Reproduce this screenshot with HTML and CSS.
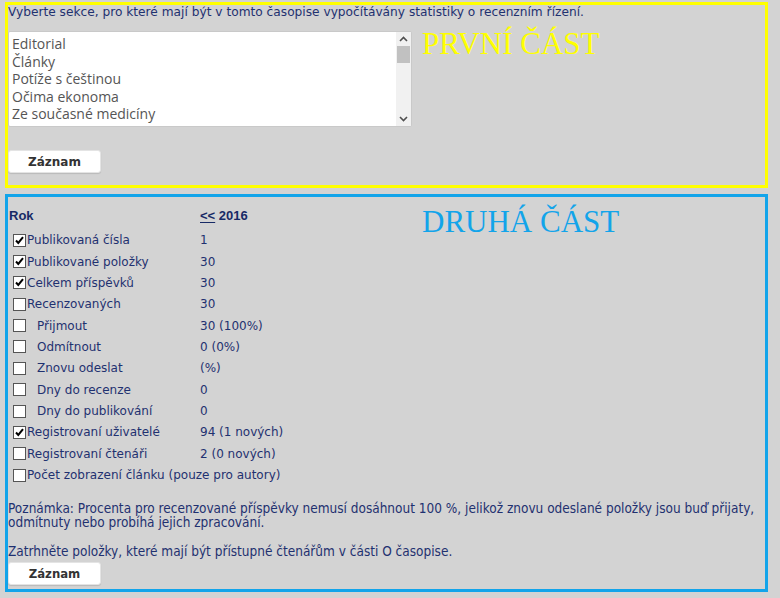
FILE: index.html
```html
<!DOCTYPE html>
<html lang="cs">
<head>
<meta charset="utf-8">
<title>Statistiky</title>
<link rel="stylesheet" href="styles.css">
</head>
<body>
<div class="page">
  <section class="part part-one">
    <p class="intro">Vyberte sekce, pro které mají být v tomto časopise vypočítávány statistiky o recenzním řízení.</p>
    <div class="row">
      <div class="listbox">
        <ul class="options">
          <li>Editorial</li>
          <li>Články</li>
          <li>Potíže s češtinou</li>
          <li>Očima ekonoma</li>
          <li>Ze současné medicíny</li>
          <li>Sekce redakce</li>
        </ul>
        <div class="scrollbar">
          <span class="arrow"><svg width="9" height="6" viewBox="0 0 9 6"><path d="M1 5 L4.5 1.5 L8 5" fill="none" stroke="#505050" stroke-width="1.6"/></svg></span>
          <span class="thumb"></span>
          <span class="track"></span>
          <span class="arrow"><svg width="9" height="6" viewBox="0 0 9 6"><path d="M1 1 L4.5 4.5 L8 1" fill="none" stroke="#505050" stroke-width="1.6"/></svg></span>
        </div>
      </div>
      <h2 class="part-title title-yellow">PRVNÍ ČÁST</h2>
    </div>
    <button class="btn" type="button">Záznam</button>
  </section>

  <section class="part part-two">
    <div class="row">
      <div class="stats">
        <div class="stats-head"><span class="name">Rok</span><span class="val"><u>&lt;&lt;</u> 2016</span></div>
        <div class="stat"><span class="name"><i class="cb on"><svg width="11" height="11" viewBox="0 0 11 11"><path d="M2 5.5 L4.3 8 L9 2.2" fill="none" stroke="#000" stroke-width="2"/></svg></i>Publikovaná čísla</span><span class="val">1</span></div>
        <div class="stat"><span class="name"><i class="cb on"><svg width="11" height="11" viewBox="0 0 11 11"><path d="M2 5.5 L4.3 8 L9 2.2" fill="none" stroke="#000" stroke-width="2"/></svg></i>Publikované položky</span><span class="val">30</span></div>
        <div class="stat"><span class="name"><i class="cb on"><svg width="11" height="11" viewBox="0 0 11 11"><path d="M2 5.5 L4.3 8 L9 2.2" fill="none" stroke="#000" stroke-width="2"/></svg></i>Celkem příspěvků</span><span class="val">30</span></div>
        <div class="stat"><span class="name"><i class="cb"></i>Recenzovaných</span><span class="val">30</span></div>
        <div class="stat"><span class="name sub"><i class="cb"></i>Přijmout</span><span class="val">30 (100%)</span></div>
        <div class="stat"><span class="name sub"><i class="cb"></i>Odmítnout</span><span class="val">0 (0%)</span></div>
        <div class="stat"><span class="name sub"><i class="cb"></i>Znovu odeslat</span><span class="val">(%)</span></div>
        <div class="stat"><span class="name sub"><i class="cb"></i>Dny do recenze</span><span class="val">0</span></div>
        <div class="stat"><span class="name sub"><i class="cb"></i>Dny do publikování</span><span class="val">0</span></div>
        <div class="stat"><span class="name"><i class="cb on"><svg width="11" height="11" viewBox="0 0 11 11"><path d="M2 5.5 L4.3 8 L9 2.2" fill="none" stroke="#000" stroke-width="2"/></svg></i>Registrovaní uživatelé</span><span class="val">94 (1 nových)</span></div>
        <div class="stat"><span class="name"><i class="cb"></i>Registrovaní čtenáři</span><span class="val">2 (0 nových)</span></div>
        <div class="stat"><span class="name wide"><i class="cb"></i>Počet zobrazení článku (pouze pro autory)</span></div>
      </div>
      <h2 class="part-title title-blue">DRUHÁ ČÁST</h2>
    </div>
    <p class="note">Poznámka: Procenta pro recenzované příspěvky nemusí dosáhnout 100 %, jelikož znovu odeslané položky jsou buď přijaty, odmítnuty nebo probíhá jejich zpracování.</p>
    <p class="note note-last">Zatrhněte položky, které mají být přístupné čtenářům v části O časopise.</p>
    <button class="btn btn-narrow" type="button">Záznam</button>
  </section>
</div>
</body>
</html>
```

FILE: styles.css
```css
html, body {
  margin: 0;
  padding: 0;
  background: #d3d3d3;
}

body {
  font-family: "DejaVu Sans", Verdana, sans-serif;
  font-size: 12px;
  color: #1f3170;
}

.page {
  padding: 2px 12px 0 5px;
}

.part {
  box-sizing: border-box;
  border: 3px solid #ffff00;
}

.part-one {
  height: 186px;
}

.part-two {
  margin-top: 6px;
  height: 398px;
  border-color: #12a4ea;
}

.intro {
  margin: 0;
  font-size: 12.2px;
  line-height: 15px;
  white-space: nowrap;
}

.row {
  display: flex;
  align-items: flex-start;
  gap: 10px;
}

.listbox {
  margin-top: 11px;
  width: 404px;
  height: 96px;
  box-sizing: border-box;
  display: flex;
  background: #fff;
  border: 1px solid #c9c9c9;
  border-radius: 2px;
  overflow: hidden;
}

.options {
  flex: 1;
  list-style: none;
  margin: 0;
  padding: 3px 0 0 3px;
  font-family: "Open Sans", "DejaVu Sans", sans-serif;
  font-size: 14px;
  line-height: 17.5px;
  color: #555;
  overflow: hidden;
}

.scrollbar {
  width: 15px;
  display: flex;
  flex-direction: column;
  align-items: stretch;
  background: #f1f1f1;
}

.arrow {
  height: 14px;
  display: flex;
  align-items: center;
  justify-content: center;
}

.thumb {
  height: 17px;
  margin: 0 1px;
  background: #c1c1c1;
}

.track {
  flex: 1;
}

.part-title {
  margin: 0;
  font-family: "Liberation Serif", "Times New Roman", serif;
  font-weight: normal;
  font-size: 31px;
  line-height: 36px;
  white-space: nowrap;
}

.title-yellow {
  margin-top: 6px;
  color: #ffff00;
}

.title-blue {
  margin-top: 7px;
  color: #12a4ea;
}

.btn {
  display: block;
  width: 93px;
  height: 23px;
  margin: 23px 0 0 0;
  padding: 0;
  border: 1px solid #e4e4e4;
  border-radius: 3px;
  background: #fff;
  box-shadow: 0 1px 1px rgba(0, 0, 0, 0.12);
  font-family: "DejaVu Sans", Verdana, sans-serif;
  font-weight: bold;
  font-size: 12px;
  color: #333;
}

.btn-narrow {
  margin-top: 4px;
  font-family: "DejaVu Sans Condensed", "DejaVu Sans", sans-serif;
  font-size: 13px;
}

.stats {
  width: 404px;
  flex: none;
}

.stats-head {
  display: flex;
  align-items: center;
  height: 20px;
  margin-top: 8px;
  margin-bottom: 4.5px;
  font-family: "Liberation Sans", Arial, sans-serif;
  font-weight: bold;
  font-size: 13px;
  color: #172a66;
}

.stats-head .name {
  width: 192px;
  padding-left: 1px;
  box-sizing: border-box;
}

.stats-head u {
  text-underline-offset: 2px;
}

.stat {
  display: flex;
  align-items: center;
  height: 21.36px;
}

.stat .name {
  width: 192px;
  display: flex;
  align-items: center;
  white-space: nowrap;
}

.stat .name.wide {
  width: auto;
}

.cb {
  flex: none;
  box-sizing: border-box;
  width: 13px;
  height: 13px;
  margin: 0 1px 0 5px;
  border: 1px solid #555;
  background: #fff;
  display: flex;
  align-items: center;
  justify-content: center;
}

.name.sub .cb {
  margin-right: 11px;
}

.note {
  margin: 15px 0 0 0;
  font-family: "DejaVu Sans Condensed", "DejaVu Sans", sans-serif;
  font-size: 13.5px;
  line-height: 14px;
}

.note-last {
  margin-top: 15px;
}
```
